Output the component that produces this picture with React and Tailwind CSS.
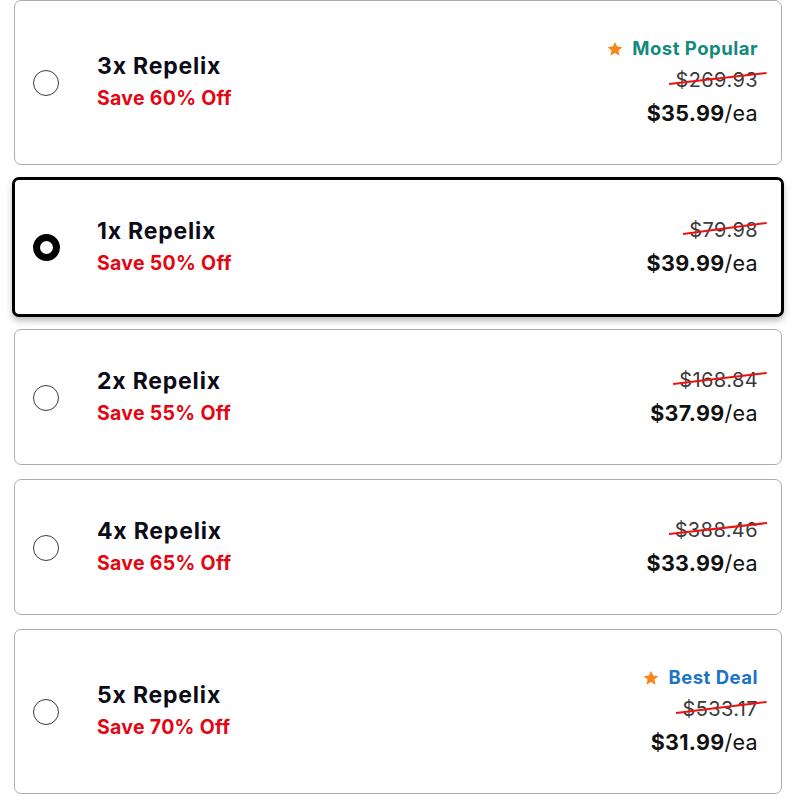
import React from "react";

const items = [
  { qty: "3x Repelix", save: "Save 60% Off", old: "$269.93", price: "$35.99", badge: { text: "Most Popular", color: "text-[#138a7c]" } },
  { qty: "1x Repelix", save: "Save 50% Off", old: "$79.98", price: "$39.99", selected: true },
  { qty: "2x Repelix", save: "Save 55% Off", old: "$168.84", price: "$37.99" },
  { qty: "4x Repelix", save: "Save 65% Off", old: "$388.46", price: "$33.99" },
  { qty: "5x Repelix", save: "Save 70% Off", old: "$533.17", price: "$31.99", badge: { text: "Best Deal", color: "text-[#1b74c6]" } },
];

function Star() {
  return (
    <svg width="18" height="18" viewBox="0 0 24 24" className="shrink-0">
      <path
        d="M12 2.5l2.9 6.3 6.9.7-5.2 4.6 1.5 6.8L12 17.4l-6.1 3.5 1.5-6.8-5.2-4.6 6.9-.7z"
        fill="#f7861b"
      />
    </svg>
  );
}

function Card({ item }) {
  const sel = item.selected;
  return (
    <div
      className={
        "flex items-center justify-between rounded-[7px] bg-white pl-[18px] pr-[23px] pt-[35px] pb-[34px] " +
        (sel
          ? "-mx-[2px] -my-[2px] border-[3px] border-black shadow-[0_4px_6px_rgba(0,0,0,0.25)]"
          : "border border-[#b3aaaa]")
      }
    >
      <div className="flex items-center">
        {sel ? (
          <div className="h-[27px] w-[27px] rounded-full border-[7px] border-black bg-white" />
        ) : (
          <div className="h-[26px] w-[26px] rounded-full border-[1.5px] border-[#3a3a3a] bg-white" />
        )}
        <div className={"flex flex-col " + (sel ? "ml-[37px]" : "ml-[38px]")}>
          <div className="text-[23px] font-bold leading-[30px] tracking-[0.8px] text-[#0c0c18]">{item.qty}</div>
          <div className="text-[19.5px] font-bold leading-[34px] tracking-[0.3px] text-[#e30613]">{item.save}</div>
        </div>
      </div>
      <div className="flex flex-col items-end">
        {item.badge && (
          <div className="-mt-[3px] flex h-[32px] items-center gap-[8px]">
            <Star />
            <span className={"text-[18.5px] font-bold tracking-[0.5px] " + item.badge.color}>{item.badge.text}</span>
          </div>
        )}
        <div className="relative text-[20px] leading-[31px] tracking-[0.4px] text-[#3a3a3a]">
          {item.old}
          <svg
            className="absolute left-[-6px] top-[6px] h-[16px] w-[calc(100%+15px)]"
            viewBox="0 0 100 16"
            preserveAspectRatio="none"
          >
            <line x1="0" y1="13" x2="100" y2="2" stroke="#ee1111" strokeWidth="2" vectorEffect="non-scaling-stroke" />
          </svg>
        </div>
        <div className="text-[21.5px] leading-[34px] tracking-[0.3px] text-[#111]">
          <span className="font-bold">{item.price}</span>
          <span>/ea</span>
        </div>
      </div>
    </div>
  );
}

export default function App() {
  return (
    <div
      className="min-h-[800px] w-[800px] bg-white pt-0"
      style={{ fontFamily: "Inter, 'Noto Sans', sans-serif" }}
    >
      <div className="ml-[14px] flex w-[768px] flex-col gap-[14px]">
        {items.map((it) => (
          <Card key={it.qty} item={it} />
        ))}
      </div>
    </div>
  );
}
